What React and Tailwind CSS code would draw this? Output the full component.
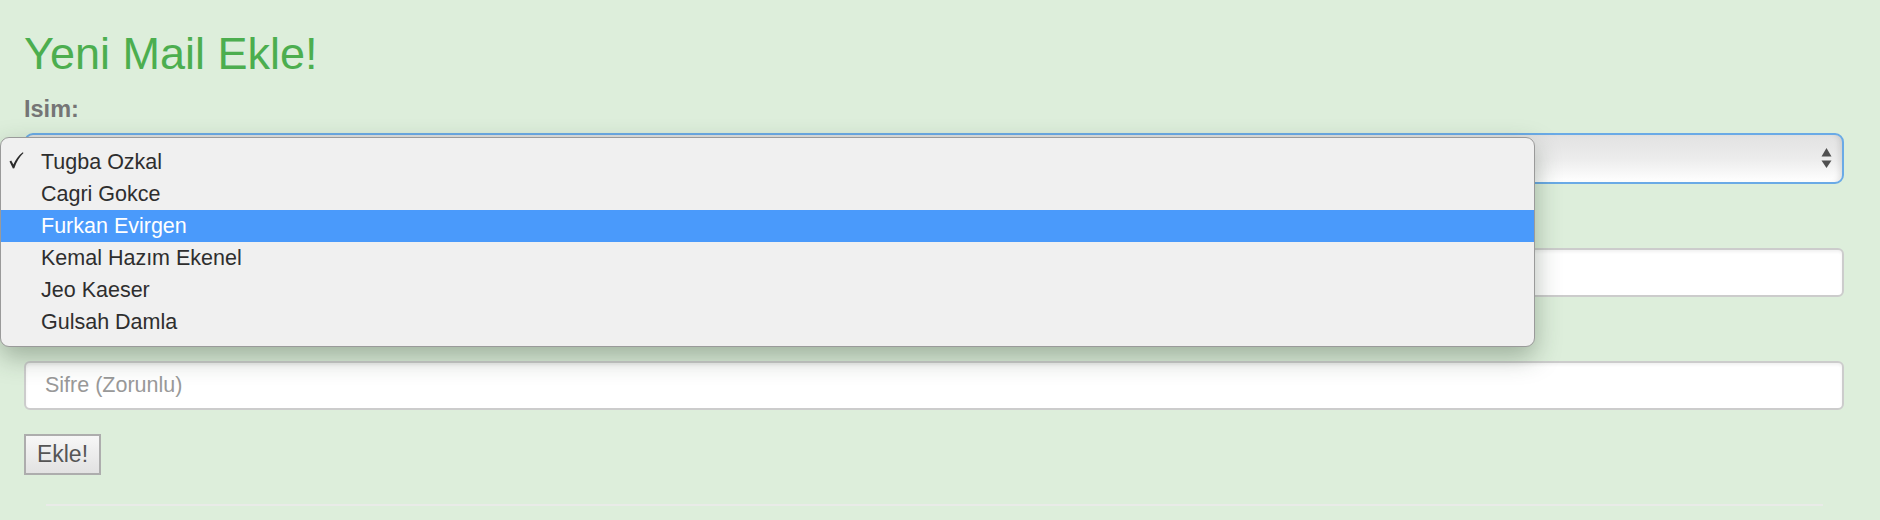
const people = [
  'Tugba Ozkal',
  'Cagri Gokce',
  'Furkan Evirgen',
  'Kemal Hazım Ekenel',
  'Jeo Kaeser',
  'Gulsah Damla',
];

function SelectArrows() {
  return (
    <svg width="11" height="21" viewBox="0 0 11 21" className="text-[#505050]">
      <path d="M5.5 0 L10.5 8.5 L0.5 8.5 Z" fill="currentColor" />
      <path d="M5.5 20 L10.5 12.5 L0.5 12.5 Z" fill="currentColor" />
    </svg>
  );
}

function CheckMark() {
  return (
    <svg width="15" height="17" viewBox="0 0 15 17" className="text-[#2a2a2a]">
      <path
        d="M0.5 9.5 L2.2 8.6 L4.4 12.6 C6.6 7.6 9.6 3.4 13.8 0.2 L14.5 1 C10.6 4.8 7.6 9.6 5.3 16.2 L3.9 16.6 Z"
        fill="currentColor"
      />
    </svg>
  );
}

function OptionMenu({ selected, highlighted }) {
  return (
    <div className="absolute left-0 top-[137px] z-10 w-[1535px] rounded-[9px] border border-[#9a9a9a] bg-[#f0f0f0] py-[8px] shadow-[0_10px_26px_rgba(40,60,40,0.35)]">
      {people.map((name) => {
        const isHi = name === highlighted;
        return (
          <div
            key={name}
            className={
              isHi
                ? 'relative flex h-[32px] items-center bg-[#4a9afb] pl-[40px] text-white'
                : 'relative flex h-[32px] items-center pl-[40px] text-[#2e2e2e]'
            }
          >
            {name === selected && (
              <span className="absolute left-[8px] top-[6px] flex">
                <CheckMark />
              </span>
            )}
            {name}
          </div>
        );
      })}
    </div>
  );
}

export default function App() {
  return (
    <div className="relative h-[520px] w-[1880px] overflow-hidden bg-[#ddeedb] font-['Liberation_Sans',Arial,sans-serif]">
      <div className="flex flex-col pl-[24px] pr-[36px] pt-[31px]">
        <h1 className="text-[45px] leading-none text-[#4cae4f]">Yeni Mail Ekle!</h1>

        <label className="mt-[22px] block text-[23.5px] font-bold leading-none text-[#757575]">Isim:</label>
        <div className="mt-[11px] flex h-[51px] items-center justify-end rounded-[9px] border-2 border-[#6aaae6] bg-gradient-to-b from-[#e2e2e2] via-[#ececec] to-[#ffffff] pr-[10px] shadow-[inset_-6px_0_6px_-4px_rgba(0,0,0,0.12)]">
          <SelectArrows />
        </div>

        {/* labels for mail and password sit under the open menu */}
        <div className="h-[64px] shrink-0" />
        <div className="h-[49px] shrink-0 rounded-[6px] border-2 border-[#cccccc] bg-white shadow-[inset_0_2px_3px_rgba(0,0,0,0.06)]" />

        <div className="h-[64px] shrink-0" />
        <div className="flex h-[49px] shrink-0 items-center rounded-[6px] border-2 border-[#cccccc] bg-white pl-[19px] text-[21.5px] text-[#999999] shadow-[inset_0_2px_3px_rgba(0,0,0,0.06)]">
          Sifre (Zorunlu)
        </div>

        <button
          type="button"
          className="mt-[24px] flex h-[41px] w-[77px] shrink-0 items-center justify-center border-2 border-[#adadad] bg-gradient-to-b from-[#f7f7f7] to-[#e2e2e2] text-[23px] text-[#555555]"
        >
          Ekle!
        </button>

        <div className="ml-[22px] mr-[21px] mt-[29px] h-[2px] shrink-0 bg-[#e9ebe8]" />
      </div>

      <div className="text-[21.5px]">
        <OptionMenu selected="Tugba Ozkal" highlighted="Furkan Evirgen" />
      </div>
    </div>
  );
}
